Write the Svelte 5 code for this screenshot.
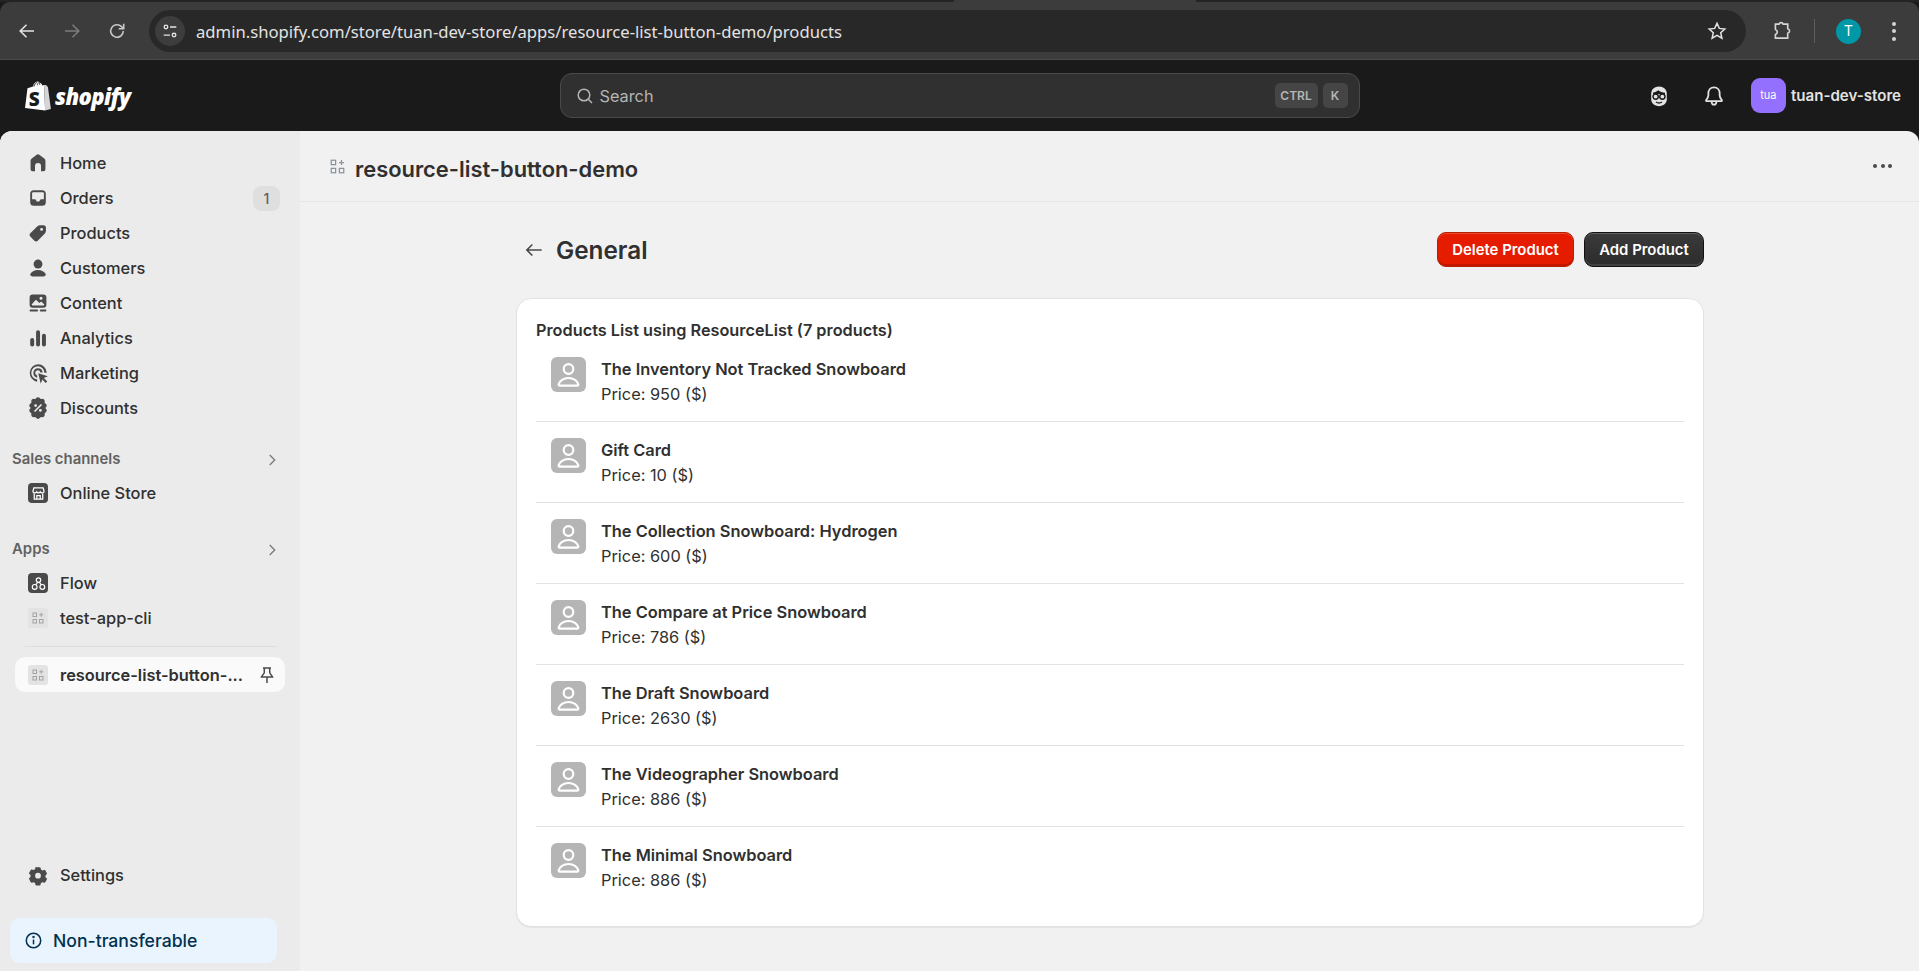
<script>
  const navItems = [
    { label: 'Home', icon: 'home' },
    { label: 'Orders', icon: 'orders', badge: '1' },
    { label: 'Products', icon: 'tag' },
    { label: 'Customers', icon: 'person' },
    { label: 'Content', icon: 'content' },
    { label: 'Analytics', icon: 'analytics' },
    { label: 'Marketing', icon: 'marketing' },
    { label: 'Discounts', icon: 'discount' }
  ];

  const products = [
    { name: 'The Inventory Not Tracked Snowboard', price: 950 },
    { name: 'Gift Card', price: 10 },
    { name: 'The Collection Snowboard: Hydrogen', price: 600 },
    { name: 'The Compare at Price Snowboard', price: 786 },
    { name: 'The Draft Snowboard', price: 2630 },
    { name: 'The Videographer Snowboard', price: 886 },
    { name: 'The Minimal Snowboard', price: 886 }
  ];
</script>

{#snippet navIcon(name)}
  <svg class="nav-icon" viewBox="0 0 20 20" fill="#4a4a4a" aria-hidden="true">
    {#if name === 'home'}
      <path d="M8.600 3.300a2.300 2.300 0 0 1 2.800 0l3.800 2.900c.6.500 1 1.200 1 2V15.200a1.600 1.600 0 0 1-1.600 1.600h-2.100V12.500a2.500 2.500 0 0 0-5 0v4.300H5.400a1.600 1.600 0 0 1-1.600-1.600V8.200c0-.8.400-1.500 1-2z" />
    {:else if name === 'orders'}
      <path fill-rule="evenodd" d="M6.500 3.500h7a3 3 0 0 1 3 3v7a3 3 0 0 1-3 3h-7a3 3 0 0 1-3-3v-7a3 3 0 0 1 3-3zM6 5.200c-.5 0-.9.400-.9.900v5h2.200c.5 0 .9.300 1.100.7l.3.600c.1.300.4.500.8.500h1c.4 0 .7-.2.800-.5l.3-.6c.2-.4.600-.7 1.100-.7h2.200v-5c0-.5-.4-.9-.9-.900z" />
    {:else if name === 'tag'}
      <path fill-rule="evenodd" d="M11.700 3.500h3.100c1 0 1.800.8 1.800 1.800v3.100c0 .8-.3 1.500-.9 2.100l-5.900 5.900c-.8.8-2 .8-2.800 0l-3.400-3.400c-.8-.8-.8-2 0-2.800l5.900-5.800c.6-.6 1.400-.9 2.200-.9zM13 8.200a1.200 1.200 0 1 0 0-2.400 1.200 1.200 0 0 0 0 2.400z" />
    {:else if name === 'person'}
      <circle cx="10" cy="6.700" r="3.700" />
      <path d="M3.600 15.100C4.400 13 7 11.600 10 11.600s5.600 1.400 6.400 3.500c.4 1-.4 1.900-1.500 1.900H5.100c-1.100 0-1.900-.9-1.500-1.900z" />
    {:else if name === 'content'}
      <path fill-rule="evenodd" d="M5.500 3h9a2.500 2.500 0 0 1 2.500 2.500v6a2.500 2.500 0 0 1-2.500 2.500h-9A2.500 2.500 0 0 1 3 11.500v-6A2.500 2.500 0 0 1 5.500 3zm-.8 8.300c0 .4.300.7.700.7h9.200c.4 0 .7-.3.700-.7l-2.600-2.500-1.500 1.200-3-2.700zM12.500 7.300a1.300 1.300 0 1 0 0-2.600 1.300 1.300 0 0 0 0 2.600z" />
      <rect x="3" y="15.500" width="7" height="1.500" rx=".7" />
      <rect x="11.500" y="15.500" width="5.500" height="1.500" rx=".7" />
    {:else if name === 'analytics'}
      <rect x="3.500" y="10" width="3.300" height="7" rx="1.600" />
      <rect x="8.400" y="3.500" width="3.300" height="13.500" rx="1.600" />
      <rect x="13.300" y="6.500" width="3.300" height="10.500" rx="1.600" />
    {:else if name === 'marketing'}
      <path d="M10 2.700a7.300 7.300 0 0 1 7.300 7h-1.900A5.500 5.500 0 1 0 9.300 15.400v1.800A7.300 7.300 0 0 1 10 2.700z" />
      <path d="M10 6a4 4 0 0 1 3.900 3.500h-1.900A2.200 2.200 0 1 0 9.300 12v1.900A4 4 0 0 1 10 6z" />
      <path d="M10.200 10.200l8 2.500-3.300 1.500 2.800 2.800-1.300 1.300-2.800-2.800-1.300 3.400z" />
    {:else if name === 'discount'}
      <path fill-rule="evenodd" d="M8.300 1.900a2.300 2.300 0 0 1 3.400 0l.6.600.9-.1a2.300 2.300 0 0 1 2.400 2.400l-.1.900.7.500a2.300 2.300 0 0 1 .3 3.400l-.5.400.5.500a2.300 2.300 0 0 1-.3 3.400l-.7.500.1.900a2.300 2.300 0 0 1-2.400 2.400l-.9-.1-.6.600a2.300 2.300 0 0 1-3.400 0l-.6-.6-.9.100a2.300 2.300 0 0 1-2.400-2.400l.1-.9-.7-.5a2.300 2.300 0 0 1-.3-3.400l.5-.5-.5-.4a2.300 2.300 0 0 1 .3-3.400l.7-.5-.1-.9a2.300 2.300 0 0 1 2.400-2.400l.9.100zM12.400 6.600l-5.800 5.800 1 1 5.800-5.800zM8 9.200a1.200 1.200 0 1 0 0-2.400 1.200 1.200 0 0 0 0 2.400zm4 4a1.200 1.200 0 1 0 0-2.400 1.200 1.200 0 0 0 0 2.400z" />
    {:else if name === 'settings'}
      <path fill-rule="evenodd" d="M8.300 2.300h3.400c.4 0 .7.300.8.600l.4 1.700 1.500.9 1.700-.5c.4-.1.800.1 1 .4l1.600 2.800c.2.300.1.800-.2 1l-1.200 1.200v1.700l1.200 1.200c.3.200.4.700.2 1l-1.600 2.800c-.2.300-.6.500-1 .4l-1.700-.5-1.500.9-.4 1.700c-.1.300-.4.600-.8.600H8.300c-.4 0-.7-.3-.8-.6l-.4-1.700-1.500-.9-1.700.5c-.4.100-.8-.1-1-.4L1.300 14c-.2-.3-.1-.8.200-1l1.200-1.200V10.100L1.500 8.900c-.3-.2-.4-.7-.2-1l1.600-2.800c.2-.3.600-.5 1-.4l1.700.5 1.500-.9.400-1.700c.1-.3.400-.6.800-.6zM10 13.500a2.800 2.800 0 1 0 0-5.600 2.800 2.800 0 0 0 0 5.600z" transform="translate(1.500 1.500) scale(.85)" />
    {/if}
  </svg>
{/snippet}

{#snippet appTile()}
  <span class="tile">
    <svg viewBox="0 0 12 12" fill="none" stroke="#a3a3a3" stroke-width="1" aria-hidden="true">
      <rect x="1" y="1" width="3.500" height="3.500" />
      <rect x="1" y="7.500" width="3.500" height="3.500" />
      <rect x="7.500" y="7.500" width="3.500" height="3.500" />
      <path d="M9.200 .8v4M7.200 2.800h4" />
    </svg>
  </span>
{/snippet}

<div class="app">
  <div class="tabstrip"><span class="active-tab"></span></div>
  <div class="chrome">
    <div class="chrome-nav">
      <svg viewBox="0 0 20 20" fill="none" stroke="#e3e3e3" stroke-width="1.600" aria-hidden="true"><path d="M17 10H3.500M9.500 3.700 3.200 10l6.300 6.300" /></svg>
      <svg viewBox="0 0 20 20" fill="none" stroke="#7c7c7c" stroke-width="1.600" aria-hidden="true"><path d="M3 10h13.500M10.500 3.700l6.300 6.300-6.300 6.300" /></svg>
      <svg viewBox="0 0 20 20" fill="none" stroke="#c7c7c7" stroke-width="1.600" aria-hidden="true"><path d="M16.300 10a6.300 6.300 0 1 1-1.800-4.400L16.500 7.600" /><path d="M16.700 2.800v5h-5" /></svg>
    </div>
    <div class="omnibox">
      <span class="site-chip">
        <svg viewBox="0 0 20 20" fill="none" stroke="#e3e3e3" stroke-width="1.500" aria-hidden="true">
          <circle cx="5.500" cy="5.500" r="2" /><path d="M10 5.500h7M3 14.500h7" /><circle cx="14.500" cy="14.500" r="2" />
        </svg>
      </span>
      <span class="url">admin.shopify.com/store/tuan-dev-store/apps/resource-list-button-demo/products</span>
      <svg class="star" viewBox="0 0 20 20" fill="none" stroke="#e3e3e3" stroke-width="1.500" aria-hidden="true"><path d="M10 2.300l2.300 5.100 5.500.6-4.100 3.700 1.200 5.500L10 14.400l-4.900 2.800 1.200-5.500L2.200 8l5.500-.6z" /></svg>
    </div>
    <div class="chrome-tools">
      <svg class="ext" viewBox="0 0 20 20" fill="none" stroke="#d5d5d5" stroke-width="1.500" aria-hidden="true"><path d="M4 3.800h3.300a2 2 0 0 1 3.800 0h4.100v4.100a2.100 2.100 0 0 1 0 4.100v4.500H4v-3.300a2.400 2.400 0 0 0 0-4.600z" /></svg>
      <span class="tool-sep"></span>
      <span class="profile">T</span>
      <span class="kebab"><i></i><i></i><i></i></span>
    </div>
  </div>

  <header class="topbar">
    <div class="logo">
      <svg viewBox="0 0 26 30" aria-hidden="true">
        <path fill="#fff" d="M2.500 7.300 8 5.500C8.600 2.800 10.500.6 12.500.6c1 0 1.500.6 1.800 1.100 1.500-.3 2.700 1.300 3 2.700l1.800-.5 1 25.500L0 27z" />
        <path fill="#d5d5d5" d="M19.100 3.900l1.900 .2 1.900 1.900 3 22-5.800 1.600z" />
        <path fill="none" stroke="#1a1a1a" stroke-width=".8" d="M9 5.600c.5-2.200 1.800-4 3.300-4.300M12.300 4.400c0-1.300.5-2.300 1.500-2.800M14.800 3.800c0-.8-.1-1.400-.4-2" />
        <text x="3.800" y="24.500" fill="#1a1a1a" font-family="Open Sans, sans-serif" font-weight="800" font-size="19">S</text>
      </svg>
      <span class="wordmark">shopify</span>
    </div>
    <div class="search">
      <svg viewBox="0 0 20 20" fill="none" stroke="#b5b5b5" stroke-width="1.500" aria-hidden="true"><circle cx="9" cy="9" r="5.800" /><path d="M13.300 13.300 17 17" /></svg>
      <span class="search-label">Search</span>
      <span class="kbd kbd-ctrl">CTRL</span>
      <span class="kbd kbd-k">K</span>
    </div>
    <div class="top-right">
      <svg class="sidekick" viewBox="0 0 20 20" aria-hidden="true">
        <path fill="#e3e3e3" d="M3.500 8c0-3.500 2.800-6 6.500-6s6.500 2.500 6.500 6v5c0 3-2.900 5.500-6.500 5.500S3.500 16 3.500 13z" />
        <path fill="#1a1a1a" d="M5 7.300c1.500-.2 3.300-1 4.500-2 1 1.200 3.500 2 5.500 2v1H5z" />
        <circle cx="7.200" cy="10.500" r="2.200" fill="#e3e3e3" stroke="#1a1a1a" stroke-width="1.200" />
        <circle cx="12.800" cy="10.500" r="2.200" fill="#e3e3e3" stroke="#1a1a1a" stroke-width="1.200" />
        <path stroke="#1a1a1a" stroke-width="1.200" fill="none" d="M7.500 15c1.500 1 3.500 1 5 0" />
      </svg>
      <svg class="bell" viewBox="0 0 20 20" fill="none" stroke="#e3e3e3" stroke-width="1.500" aria-hidden="true">
        <path d="M10 2.800c-2.900 0-4.700 2.200-4.700 5v1.500c0 1.500-.7 2.700-1.800 4-.3.400 0 1 .5 1h12c.5 0 .8-.6.500-1-1.100-1.300-1.800-2.500-1.800-4V7.800c0-2.800-1.800-5-4.700-5z" />
        <path d="M8 14.500c0 1.500.9 2.700 2 2.700s2-1.200 2-2.700" />
      </svg>
      <span class="store-avatar">tua</span>
      <span class="store-name">tuan-dev-store</span>
    </div>
  </header>

  <div class="body">
    <aside class="sidebar">
      <nav class="nav">
        {#each navItems as item}
          <div class="nav-row">
            {@render navIcon(item.icon)}
            <span class="nav-label">{item.label}</span>
            {#if item.badge}<span class="badge">{item.badge}</span>{/if}
          </div>
        {/each}
      </nav>

      <div class="section-head first">
        <span>Sales channels</span>
        <svg viewBox="0 0 20 20" fill="none" stroke="#7a7a7a" stroke-width="1.500" aria-hidden="true"><path d="M7.500 4.500 13 10l-5.500 5.500" /></svg>
      </div>
      <div class="nav-row">
        <span class="dark-tile">
          <svg viewBox="0 0 20 20" fill="none" stroke="#fff" stroke-width="1.500" aria-hidden="true">
            <path d="M4.500 3.500h11l1 4c0 1-1 1.800-2.200 1.800-.9 0-1.800-.5-2.200-1.200-.4.700-1.200 1.200-2.100 1.200s-1.700-.5-2.100-1.200c-.4.700-1.300 1.200-2.200 1.200-1.200 0-2.200-.8-2.200-1.800z" />
            <path d="M5 10v6.500h10V10M8 16.500v-4h4v4" />
          </svg>
        </span>
        <span class="nav-label">Online Store</span>
      </div>

      <div class="section-head apps">
        <span>Apps</span>
        <svg viewBox="0 0 20 20" fill="none" stroke="#7a7a7a" stroke-width="1.500" aria-hidden="true"><path d="M7.500 4.500 13 10l-5.500 5.500" /></svg>
      </div>
      <div class="nav-row">
        <span class="dark-tile">
          <svg viewBox="0 0 20 20" fill="none" stroke="#fff" stroke-width="1.400" aria-hidden="true">
            <circle cx="10" cy="6" r="2.600" /><circle cx="5.500" cy="14" r="2.800" /><circle cx="14.500" cy="14" r="2.800" />
            <path d="M9 8.500 6.800 11.500M11 8.500l2.200 3" />
          </svg>
        </span>
        <span class="nav-label">Flow</span>
      </div>
      <div class="nav-row">
        {@render appTile()}
        <span class="nav-label">test-app-cli</span>
      </div>
      <div class="side-divider"></div>
      <div class="nav-row selected">
        {@render appTile()}
        <span class="nav-label strong">resource-list-button-...</span>
        <svg class="pin" viewBox="0 0 20 20" fill="none" stroke="#4a4a4a" stroke-width="1.500" aria-hidden="true">
          <path d="M6 3h8M7.300 3v4.500c0 1-2 2.500-2.800 4.500h11c-.8-2-2.800-3.500-2.800-4.500V3M10 12v6" />
        </svg>
      </div>

      <div class="side-spacer"></div>

      <div class="nav-row">
        {@render navIcon('settings')}
        <span class="nav-label">Settings</span>
      </div>
      <div class="plan-banner">
        <svg viewBox="0 0 20 20" fill="none" stroke="#00324f" stroke-width="1.600" aria-hidden="true">
          <circle cx="10" cy="10" r="7.600" /><path d="M10 9v5" /><circle cx="10" cy="6.300" r=".5" fill="#00324f" />
        </svg>
        <span>Non-transferable</span>
      </div>
    </aside>

    <main class="main">
      <div class="app-header">
        <span class="header-tile">
          <svg viewBox="0 0 12 12" fill="none" stroke="#8a949e" stroke-width="1" aria-hidden="true">
            <rect x="1" y="1" width="3.500" height="3.500" />
            <rect x="1" y="7.500" width="3.500" height="3.500" />
            <rect x="7.500" y="7.500" width="3.500" height="3.500" />
            <path d="M9.200 .8v4M7.200 2.800h4" />
          </svg>
        </span>
        <h1>resource-list-button-demo</h1>
        <span class="more"><i></i><i></i><i></i></span>
      </div>

      <div class="page">
        <div class="page-head">
          <svg class="back" viewBox="0 0 20 20" fill="none" stroke="#4a4a4a" stroke-width="1.500" aria-hidden="true"><path d="M17 10H3.500M8.500 5l-5 5 5 5" /></svg>
          <h2>General</h2>
          <div class="actions">
            <button class="btn btn-danger">Delete Product</button>
            <button class="btn btn-dark">Add Product</button>
          </div>
        </div>

        <section class="card">
          <h3>Products List using ResourceList (7 products)</h3>
          <ul class="list">
            {#each products as product}
              <li class="item">
                <span class="thumb">
                  <svg viewBox="0 0 35 35" fill="none" stroke="#fff" stroke-width="2.200" aria-hidden="true">
                    <circle cx="17.500" cy="12" r="4.800" />
                    <path d="M17.500 21c-5 0-9 3-9.800 6.300-.2.800.3 1.300 1 1.300h17.600c.7 0 1.200-.5 1-1.300-.8-3.300-4.800-6.300-9.800-6.300z" />
                  </svg>
                </span>
                <div class="item-text">
                  <div class="item-name">{product.name}</div>
                  <div class="item-price">Price: {product.price} ($)</div>
                </div>
              </li>
            {/each}
          </ul>
        </section>
      </div>
    </main>
  </div>
</div>

<style>
  :global(body) {
    margin: 0;
    background: #1a1a1a;
  }

  .app {
    height: 971px;
    overflow: hidden;
    display: flex;
    flex-direction: column;
    font-family: Inter, "Noto Sans", sans-serif;
    color: #303030;
  }

  svg {
    display: block;
    flex: none;
  }

  /* browser toolbar */
  .tabstrip {
    height: 2px;
    flex: none;
    background: #242424;
  }

  .active-tab {
    display: block;
    width: 242px;
    height: 2px;
    margin-left: 954px;
    background: #3c3c3c;
  }

  .chrome {
    height: 58px;
    flex: none;
    display: flex;
    align-items: flex-start;
    background: #3c3c3c;
    border-radius: 10px 10px 0 0;
    box-sizing: border-box;
    border-bottom: 1px solid #4a4a4a;
  }

  .chrome-nav {
    display: flex;
    align-items: center;
    gap: 25px;
    height: 42px;
    margin: 8px 0 0 17px;
  }

  .chrome-nav svg {
    width: 20px;
    height: 20px;
  }

  .omnibox {
    width: 1597px;
    height: 42px;
    margin: 8px 0 0 22px;
    flex: none;
    display: flex;
    align-items: center;
    box-sizing: border-box;
    padding: 0 19px 0 6px;
    background: #282828;
    border-radius: 21px;
  }

  .site-chip {
    width: 30px;
    height: 30px;
    border-radius: 50%;
    background: #3d3d3d;
    display: flex;
    align-items: center;
    justify-content: center;
  }

  .site-chip svg {
    width: 18px;
    height: 18px;
  }

  .url {
    margin-left: 11px;
    flex: 1;
    font-family: "Noto Sans", Roboto, sans-serif;
    font-size: 16.650px;
    color: #e3e3e3;
    white-space: nowrap;
  }

  .star {
    width: 20px;
    height: 20px;
  }

  .chrome-tools {
    display: flex;
    align-items: center;
    height: 42px;
    margin: 8px 0 0 25px;
  }

  .ext {
    width: 22px;
    height: 22px;
  }

  .tool-sep {
    width: 1px;
    height: 24px;
    margin-left: 21px;
    background: #5e5e5e;
  }

  .profile {
    width: 25px;
    height: 25px;
    margin-left: 21px;
    border-radius: 50%;
    background: #0097a7;
    color: #fff;
    font-size: 14px;
    line-height: 25px;
    text-align: center;
    font-family: Roboto, sans-serif;
  }

  .kebab {
    margin-left: 31px;
    display: flex;
    flex-direction: column;
    gap: 3.500px;
  }

  .kebab i {
    width: 4px;
    height: 4px;
    border-radius: 50%;
    background: #d5d5d5;
  }

  /* shopify top bar */
  .topbar {
    height: 71px;
    flex: none;
    background: #1a1a1a;
    display: grid;
    grid-template-columns: 1fr 800px 1fr;
    align-items: center;
  }

  .logo {
    display: flex;
    align-items: center;
    gap: 4px;
    padding-left: 25px;
  }

  .logo svg {
    width: 26px;
    height: 30px;
  }

  .wordmark {
    font-family: "Open Sans", sans-serif;
    font-weight: 800;
    font-style: italic;
    font-size: 22px;
    letter-spacing: -.6px;
    color: #fff;
    line-height: 30px;
  }

  .search {
    height: 45px;
    box-sizing: border-box;
    border: 1px solid #4a4a4a;
    border-radius: 12px;
    background: #303030;
    display: flex;
    align-items: center;
    padding: 0 11px 0 14px;
  }

  .search svg {
    width: 20px;
    height: 20px;
  }

  .search-label {
    margin-left: 5px;
    flex: 1;
    font-size: 16.300px;
    color: #b5b5b5;
  }

  .kbd {
    height: 25px;
    border-radius: 5px;
    background: #454545;
    color: #b5b5b5;
    font-size: 12px;
    font-weight: 600;
    line-height: 25px;
    text-align: center;
  }

  .kbd-ctrl {
    width: 43px;
  }

  .kbd-k {
    width: 25px;
    margin-left: 5px;
  }

  .top-right {
    display: flex;
    align-items: center;
    justify-content: flex-end;
    padding-right: 18px;
  }

  .sidekick,
  .bell {
    width: 24px;
    height: 24px;
  }

  .bell {
    margin-left: 31px;
  }

  .store-avatar {
    width: 35px;
    height: 35px;
    margin-left: 25px;
    border-radius: 9px;
    background: #9470ff;
    color: #fff;
    font-size: 11px;
    line-height: 35px;
    text-align: center;
  }

  .store-name {
    margin-left: 5px;
    font-size: 15.100px;
    font-weight: 600;
    color: #e3e3e3;
  }

  /* body */
  .body {
    flex: 1;
    display: flex;
    min-height: 0;
    background: #f1f1f1;
    border-radius: 12px 12px 0 0;
    overflow: hidden;
  }

  .sidebar {
    width: 300px;
    flex: none;
    box-sizing: border-box;
    background: #ebebeb;
    padding: 14.500px 15px 8px;
    display: flex;
    flex-direction: column;
  }

  .nav-row {
    height: 35px;
    flex: none;
    display: flex;
    align-items: center;
    padding-left: 11px;
    padding-right: 5px;
    border-radius: 10px;
  }

  .nav-icon {
    width: 24px;
    height: 24px;
  }

  .nav-label {
    margin-left: 10px;
    font-size: 16.400px;
    font-weight: 500;
    color: #303030;
    white-space: nowrap;
  }

  .badge {
    margin-left: auto;
    width: 27px;
    height: 25px;
    border-radius: 8px;
    background: #dfdfdf;
    color: #616161;
    font-size: 14px;
    font-weight: 500;
    line-height: 25px;
    text-align: center;
  }

  .section-head {
    height: 34px;
    flex: none;
    display: flex;
    align-items: center;
    justify-content: space-between;
    margin-left: -3px;
    padding-right: 4px;
    font-size: 14.900px;
    font-weight: 600;
    color: #616161;
  }

  .section-head svg {
    width: 18px;
    height: 18px;
    margin-top: 3px;
  }

  .section-head.first {
    margin-top: 16px;
  }

  .section-head.apps {
    margin-top: 21px;
  }

  .dark-tile {
    width: 20px;
    height: 20px;
    margin: 0 2px;
    border-radius: 4px;
    background: #4a4a4a;
    display: flex;
    align-items: center;
    justify-content: center;
  }

  .dark-tile svg {
    width: 17px;
    height: 17px;
  }

  .tile {
    width: 20px;
    height: 20px;
    margin: 0 2px;
    border-radius: 3px;
    background: #e3e3e3;
    display: flex;
    align-items: center;
    justify-content: center;
  }

  .tile svg {
    width: 12px;
    height: 12px;
  }

  .side-divider {
    height: 1px;
    margin: 10.500px 8px 10px 10px;
    background: #dedede;
    flex: none;
  }

  .selected {
    background: #fafafa;
    padding-right: 8px;
  }

  .strong {
    font-weight: 600;
  }

  .pin {
    width: 20px;
    height: 20px;
    margin-left: auto;
  }

  .side-spacer {
    flex: 1;
  }

  .plan-banner {
    margin: 25.500px 8px 0 -5px;
    height: 45px;
    flex: none;
    display: flex;
    align-items: center;
    padding-left: 14px;
    border-radius: 10px;
    background: #eaf4ff;
    color: #00324f;
    font-size: 17.600px;
    font-weight: 500;
  }

  .plan-banner svg {
    width: 19px;
    height: 19px;
    margin-right: 10px;
  }

  /* main column */
  .main {
    flex: 1;
    min-width: 0;
  }

  .app-header {
    height: 71px;
    box-sizing: border-box;
    border-bottom: 1px solid #e6e6e6;
    display: flex;
    align-items: center;
    padding: 0 27px 0 30px;
  }

  .header-tile svg {
    width: 15px;
    height: 15px;
  }

  h1 {
    margin: 6px 0 0 10px;
    font-size: 21.900px;
    font-weight: 600;
    color: #303030;
    flex: 1;
  }

  .more {
    display: flex;
    gap: 3.500px;
  }

  .more i {
    width: 4px;
    height: 4px;
    border-radius: 50%;
    background: #4a4a4a;
  }

  .page {
    width: 1188px;
    margin: 0 0 0 216px;
    padding-top: 30px;
  }

  .page-head {
    height: 35px;
    display: flex;
    align-items: center;
    margin-bottom: 31px;
    padding-left: 7px;
  }

  .back {
    width: 22px;
    height: 22px;
  }

  h2 {
    margin: 0 0 0 11px;
    flex: 1;
    font-size: 24.300px;
    font-weight: 600;
    color: #303030;
  }

  .actions {
    display: flex;
    gap: 10px;
  }

  .btn {
    height: 35px;
    padding: 0;
    border-radius: 9px;
    font-family: inherit;
    font-size: 14.900px;
    font-weight: 600;
    color: #fff;
  }

  .btn-danger {
    width: 137px;
    background: #e51c00;
    border: 1px solid #b42000;
    box-shadow: inset 0 1px 0 rgba(255, 255, 255, .2), inset 0 -2px 0 rgba(0, 0, 0, .15);
  }

  .btn-dark {
    width: 120px;
    background: linear-gradient(#3a3a3a, #2c2c2c);
    border: 1px solid #111;
    box-shadow: inset 0 1px 0 rgba(255, 255, 255, .2), inset 0 -2px 0 rgba(255, 255, 255, .1);
  }

  .card {
    box-sizing: border-box;
    height: 629px;
    padding: 21px 19px 0;
    background: #fff;
    border: 1px solid #e3e3e3;
    border-radius: 15px;
    box-shadow: 0 1px 1px rgba(0, 0, 0, .06);
  }

  h3 {
    margin: 0;
    font-size: 16.300px;
    line-height: 20px;
    font-weight: 600;
    color: #303030;
  }

  .list {
    list-style: none;
    margin: 1px 0 0;
    padding: 0;
  }

  .item {
    height: 81px;
    box-sizing: border-box;
    padding: 16px 15px 0;
    display: flex;
    gap: 15px;
    border-bottom: 1px solid #e3e3e3;
  }

  .item:last-child {
    border-bottom: none;
  }

  .thumb {
    width: 35px;
    height: 35px;
    border-radius: 6px;
    background: #b5b5b5;
  }

  .item-name {
    font-size: 16.400px;
    line-height: 25px;
    font-weight: 600;
    color: #303030;
  }

  .item-price {
    font-size: 16.350px;
    line-height: 25px;
    color: #303030;
  }
</style>
